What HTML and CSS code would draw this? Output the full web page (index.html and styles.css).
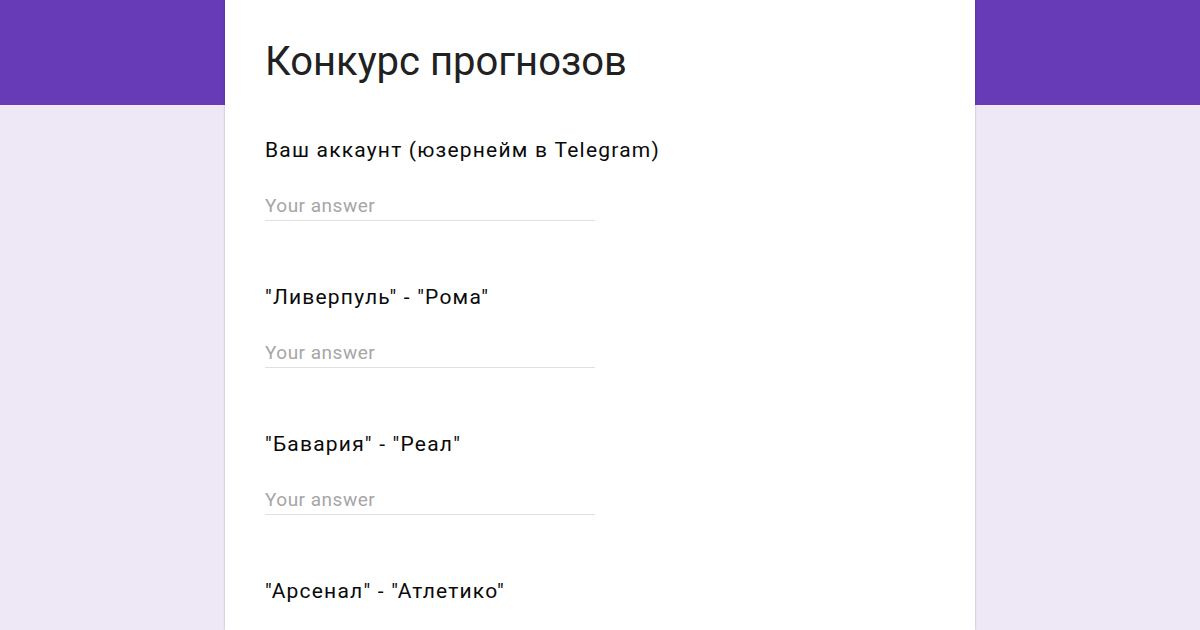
FILE: index.html
```html
<!DOCTYPE html>
<html lang="ru">
<head>
    <meta charset="UTF-8">
    <meta name="viewport" content="width=device-width, initial-scale=1.0">
    <title>Конкурс прогнозов</title>
    <link rel="stylesheet" href="styles.css">
</head>
<body>
    <div class="form-card">
        <h1 class="form-title">Конкурс прогнозов</h1>

        <div class="question">
            <div class="question-title">Ваш аккаунт (юзернейм в Telegram)</div>
            <input type="text" class="answer" placeholder="Your answer">
        </div>

        <div class="question">
            <div class="question-title">"Ливерпуль" - "Рома"</div>
            <input type="text" class="answer" placeholder="Your answer">
        </div>

        <div class="question">
            <div class="question-title">"Бавария" - "Реал"</div>
            <input type="text" class="answer" placeholder="Your answer">
        </div>

        <div class="question">
            <div class="question-title">"Арсенал" - "Атлетико"</div>
            <input type="text" class="answer" placeholder="Your answer">
        </div>
    </div>
</body>
</html>
```

FILE: styles.css
```css
html, body {
    margin: 0;
    height: 630px;
    overflow: hidden;
}
body {
    font-family: Roboto, "Liberation Sans", Arial, sans-serif;
    background: linear-gradient(#673ab7 0, #673ab7 105px, #ede7f6 105px);
}
.form-card {
    width: 750px;
    height: 630px;
    margin: 0 auto;
    padding: 38px 40px 0;
    box-sizing: border-box;
    overflow: hidden;
    background-color: white;
    box-shadow: 0 0 2px rgba(0,0,0,0.25);
}
.form-title {
    margin: 0 0 50px 0;
    font-size: 40px;
    line-height: 48px;
    font-weight: 400;
    color: #212121;
}
.question {
    margin-bottom: 62px;
}
.question-title {
    font-size: 21px;
    line-height: 28px;
    letter-spacing: 1.2px;
    color: #0a0a0a;
}
.answer {
    display: block;
    width: 330px;
    height: 28px;
    margin-top: 29px;
    padding: 0 0 3px 0;
    box-sizing: border-box;
    border: none;
    border-bottom: 1px solid #e0e0e0;
    font-family: inherit;
    font-size: 19px;
    line-height: 24px;
    letter-spacing: 0.5px;
    color: #212121;
    outline: none;
    background: transparent;
}
.answer::placeholder {
    color: #a6a6a6;
}
```
